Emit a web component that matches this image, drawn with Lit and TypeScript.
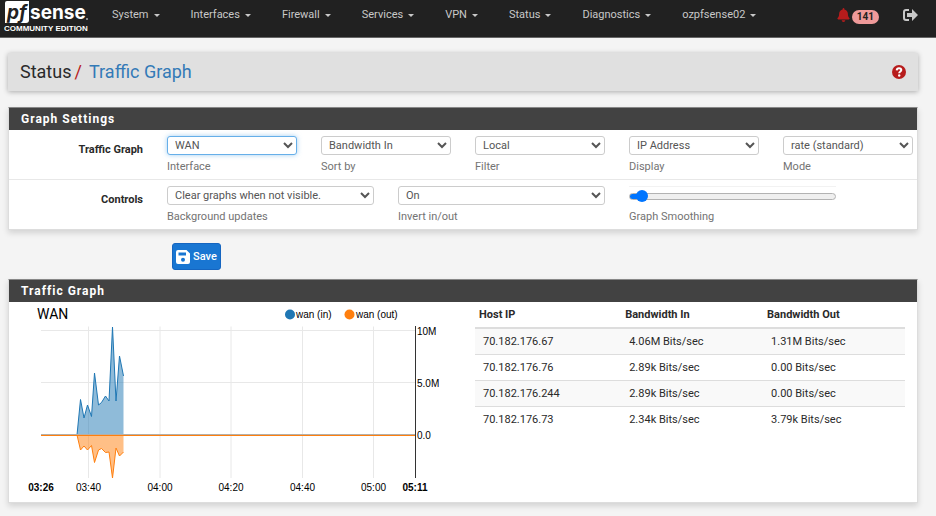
import { LitElement, html, svg, css } from "lit";
import { customElement } from "lit/decorators.js";

const MENU = ["System", "Interfaces", "Firewall", "Services", "VPN", "Status", "Diagnostics", "ozpfsense02"];

@customElement("top-nav")
class TopNav extends LitElement {
  static styles = css`
    :host { display: block; }
    .bar { display: flex; align-items: flex-start; height: 37px; background: #212121; border-bottom: 1px solid #666; font-family: Roboto, sans-serif; font-size: 11px; line-height: 16px; color: #c8c8c8; }
    .logo { display: block; width: 86px; height: 36px; margin: 0 7px 0 4px; flex: none; }
    .brand { display: block; }
    .menu { display: flex; margin: 0; padding: 0; list-style: none; flex: 1; }
    .toggle { display: flex; align-items: center; gap: 5px; padding: 7px 15px 7px 15px; border: 0; background: none; font: inherit; color: inherit; }
    .caret { margin-right: 1px; border: 3px solid transparent; border-top-color: currentColor; border-bottom: 0; }
    .tools { display: flex; align-items: flex-start; padding-right: 18px; }
    .alerts { display: flex; align-items: flex-start; gap: 2px; margin: 8px 24px 0 0; padding: 0; border: 0; background: none; font: inherit; }
    .bell { width: 13px; height: 14px; fill: #b71c1c; }
    .badge { margin-top: 2px; padding: 0 5px; border-radius: 8px; background: #ef9a9a; color: #212121; font-size: 10px; font-weight: 700; line-height: 14px; }
    .exit { width: 15px; height: 12px; margin-top: 9px; fill: #c8c8c8; display: block; }
    .wordmark { font: 700 19px Inter, sans-serif; fill: #fff; }
    .pf { font: italic 700 19px Inter, sans-serif; fill: #212121; }
    .edition { font: 700 8px "Liberation Sans", Arial, sans-serif; fill: #fff; }
  `;
  render() {
    return html`
      <nav class="bar">
        <a class="brand" href="#" aria-label="pfSense Community Edition">
          <svg class="logo" viewBox="0 0 86 36">
            <path d="M3 1H25V20Q25 23 22 23H1V3Q1 1 3 1Z" fill="#fff" />
            <text class="pf" x="3" y="19">pf</text>
            <text class="wordmark" x="26" y="19">sense</text>
            <circle cx="83" cy="19" r="1" fill="#aaa" />
            <text class="edition" x="0" y="31">COMMUNITY EDITION</text>
          </svg>
        </a>
        <ul class="menu">
          ${MENU.map((m) => html`<li><button class="toggle">${m}<span class="caret"></span></button></li>`)}
        </ul>
        <div class="tools">
          <button class="alerts" aria-label="Notices">
            <svg class="bell" viewBox="0 0 448 512"><path d="M224 512c35 0 64-29 64-64H160c0 35 29 64 64 64zm215-150c-19-21-55-52-55-154 0-78-54-140-128-155V32a32 32 0 0 0-64 0v21C118 68 64 130 64 208c0 102-36 133-55 154-6 6-9 14-9 22 0 16 13 32 32 32h384c19 0 32-16 32-32 0-8-3-16-9-22z" /></svg>
            <span class="badge">141</span>
          </button>
          <a href="#" aria-label="Log out">
            <svg class="exit" viewBox="0 0 15 12"><path d="M6 0H3Q0 0 0 3V9Q0 12 3 12H6V10H3Q2 10 2 9V3Q2 2 3 2H6Z" /><path d="M9 0L15 6 9 12V8H4V4H9Z" /></svg>
          </a>
        </div>
      </nav>`;
  }
}

const FIELDS = [
  { id: "if", value: "WAN", help: "Interface" },
  { id: "sort", value: "Bandwidth In", help: "Sort by" },
  { id: "filter", value: "Local", help: "Filter" },
  { id: "display", value: "IP Address", help: "Display" },
  { id: "mode", value: "rate (standard)", help: "Mode" },
];
const CONTROLS = [
  { id: "bg", value: "Clear graphs when not visible.", help: "Background updates" },
  { id: "invert", value: "On", help: "Invert in/out" },
];

@customElement("graph-settings")
class GraphSettings extends LitElement {
  static styles = css`
    :host { display: block; }
    .row { display: grid; grid-template-columns: repeat(12, minmax(0, 1fr)); margin: 0 -8px; padding: 6px 0 4px; }
    .rule { height: 1px; background: #e8e8e8; }
    .title { grid-column: span 2; padding: 6px 12px 0; text-align: right; font-weight: 700; }
    .two { grid-column: span 2; }
    .three { grid-column: span 3; }
    .field { padding: 0 12px; display: flex; flex-direction: column; }
    .select { display: block; width: 100%; height: 19px; box-sizing: border-box; padding: 0 0 0 3px; border: 1px solid #ccc; border-radius: 3px; background-color: #fff; color: #555; font: 11px Roboto, sans-serif; outline: 0; }
    .active { border-color: #66afe9; box-shadow: 0 0 5px rgba(102, 175, 233, 0.6); }
    .help { margin-top: 4px; line-height: 16px; color: #737373; }
    .range { appearance: none; display: block; width: 100%; height: 19px; margin: 0; border-top: 1px solid #f2f2f2; box-sizing: border-box; background: none; }
    .range::-webkit-slider-runnable-track { box-sizing: border-box; height: 7px; border: 1px solid #b2b2b2; border-radius: 4px; background: linear-gradient(to right, #0075ff 12px, #efefef 12px); }
    .range::-webkit-slider-thumb { appearance: none; width: 12px; height: 12px; margin-top: -4px; border-radius: 50%; background: #0075ff; }
  `;
  field(f: { id: string; value: string; help: string }, span: string) {
    return html`<div class="field ${span}">
      <select class="select ${f.id === "if" ? "active" : ""}" id=${f.id}><option>${f.value}</option></select>
      <label class="help" for=${f.id}>${f.help}</label>
    </div>`;
  }
  render() {
    return html`
      <div class="row"><div class="title">Traffic Graph</div>${FIELDS.map((f) => this.field(f, "two"))}</div>
      <div class="rule"></div>
      <div class="row">
        <div class="title">Controls</div>
        ${CONTROLS.map((f) => this.field(f, "three"))}
        <div class="field three">
          <input class="range" type="range" id="smooth" min="0" max="100" value="3" />
          <label class="help" for="smooth">Graph Smoothing</label>
        </div>
      </div>`;
  }
}

const TICKS_X: [number, string][] = [[79.5, "03:40"], [151, "04:00"], [222, "04:20"], [293.5, "04:40"], [364.5, "05:00"]];
const TICKS_Y: [number, string][] = [[28.5, "10M"], [80.5, "5.0M"], [132.5, "0.0"]];
const IN_POINTS = "68,133 71.5,97.5 75,116 78.5,103 82.5,114.5 85.5,71 89.5,103 92.5,100.5 96.5,94 100,99 103.5,25 107,99 110.5,54 114.5,74";
const OUT_POINTS = "68,133 71.5,148 75,144 78.5,148 82.5,143.5 85.5,160.5 89.5,148 92.5,146.5 96.5,150.5 100,150 103.5,176 107,146 110.5,154 114.5,150";

@customElement("traffic-chart")
class TrafficChart extends LitElement {
  static styles = css`
    :host { display: block; }
    .chart { display: block; width: 100%; }
    .name { font: 14px Roboto, sans-serif; fill: #000; }
    .tick { font: 10px "Liberation Sans", Arial, sans-serif; fill: #000; }
    .mid { text-anchor: middle; }
    .bold { font-weight: 700; }
    .grid { stroke: #e8e8e8; }
    .in { fill: #1f77b4; }
    .out { fill: #ff7f0e; }
    .area { fill-opacity: 0.5; }
    .line-in { fill: none; stroke: #1f77b4; }
    .line-out { fill: none; stroke: #ff7f0e; }
    .zero { stroke: #b5b0a8; }
  `;
  render() {
    return html`<svg class="chart" viewBox="0 0 454 200" role="img" aria-label="WAN traffic">
      <text class="name" x="28" y="17">WAN</text>
      <circle class="in" cx="281" cy="12.5" r="5" /><text class="tick" x="287" y="16">wan (in)</text>
      <circle class="out" cx="340.5" cy="12.5" r="5" /><text class="tick" x="347" y="16">wan (out)</text>
      ${TICKS_X.map(([x, t]) => svg`<path class="grid" d="M${x} 24.5V176" /><text class="tick mid" x=${x} y="189">${t}</text>`)}
      ${TICKS_Y.map(([y, t]) => svg`<path class="grid" d="M32 ${y}H406" /><text class="tick" x="408" y=${y + 4}>${t}</text>`)}
      <path class="area in" d="M${IN_POINTS} 114.5,133Z" />
      <path class="area out" d="M${OUT_POINTS} 114.5,133Z" />
      <polyline class="line-in" points=${IN_POINTS} />
      <polyline class="line-out" points=${OUT_POINTS} />
      <path class="zero" d="M32 132.5H406" />
      <path class="line-out" d="M32 133.5H406" />
      <path d="M406.5 24V176" stroke="#333" />
      <text class="tick mid bold" x="32" y="189">03:26</text>
      <text class="tick mid bold" x="406" y="189">05:11</text>
    </svg>`;
  }
}

const HOSTS = [
  ["70.182.176.67", "4.06M Bits/sec", "1.31M Bits/sec"],
  ["70.182.176.76", "2.89k Bits/sec", "0.00 Bits/sec"],
  ["70.182.176.244", "2.89k Bits/sec", "0.00 Bits/sec"],
  ["70.182.176.73", "2.34k Bits/sec", "3.79k Bits/sec"],
];

@customElement("app-root")
class AppRoot extends LitElement {
  static styles = css`
    :host { display: block; min-height: 100vh; background: #f4f4f4; color: #2a2a2a; font: 11px/16px Roboto, sans-serif; }
    .page { padding: 15px 18px 13px 8px; }
    .crumbs { display: flex; align-items: center; justify-content: space-between; height: 38px; padding: 0 12px; background: #e0e0e0; box-shadow: 0 1px 5px rgba(0, 0, 0, 0.3); }
    .path { margin: 0; font-size: 18px; line-height: 24px; font-weight: 400; }
    .slash { margin: 0 3px; color: #b71c1c; }
    .here { color: #337ab7; text-decoration: none; }
    .help { display: block; width: 14px; height: 14px; }
    .panel { border: 1px solid #ddd; border-top-color: #888; background: #fff; box-shadow: 0 3px 6px rgba(0, 0, 0, 0.14); }
    .settings { margin-top: 16px; }
    .heading { margin: 0; padding: 3px 12px; background: #424242; color: #fff; font-size: 12px; line-height: 16px; font-weight: 700; letter-spacing: 1px; }
    .save { display: flex; align-items: center; gap: 3px; height: 27px; margin: 13px 0 9px 164px; padding: 0 3px; border: 1px solid #1565c0; border-radius: 3px; background: #1976d2; color: #fff; font: 500 11px Roboto, sans-serif; }
    .disk { width: 14px; height: 14px; fill: #fff; }
    .body { display: grid; grid-template-columns: 1fr 1fr; }
    .hosts { padding: 0 12px; }
    .table { width: 100%; border-collapse: collapse; table-layout: fixed; }
    .table th { height: 16px; padding: 5px 4px 4px; border-bottom: 2px solid #ddd; text-align: left; font-weight: 700; }
    .table td { height: 17px; padding: 4px 8px; border-top: 1px solid #ddd; }
    .table tbody tr:nth-child(odd) { background: #f9f9f9; }
    .c1 { width: 34%; }
    .c2 { width: 33%; }
  `;
  render() {
    return html`
      <top-nav></top-nav>
      <main class="page">
        <header class="crumbs">
          <h1 class="path">Status<span class="slash">/</span> <a class="here" href="#">Traffic Graph</a></h1>
          <a href="#" aria-label="Help">
            <svg class="help" viewBox="0 0 14 14"><circle cx="7" cy="7" r="7" fill="#b71c1c" /><path d="M4.7 5.4C4.8 3.9 5.8 3.2 7 3.2C8.4 3.2 9.3 4 9.3 5.1C9.3 6.6 7.2 6.5 7.2 8.3" fill="none" stroke="#fff" stroke-width="2" /><circle cx="7.2" cy="10.5" r="1.2" fill="#fff" /></svg>
          </a>
        </header>
        <section class="panel settings">
          <h2 class="heading">Graph Settings</h2>
          <graph-settings></graph-settings>
        </section>
        <button class="save">
          <svg class="disk" viewBox="0 0 14 14"><path fill-rule="evenodd" d="M2 0H10.5L14 3.5V12Q14 14 12 14H2Q0 14 0 12V2Q0 0 2 0ZM2.5 2.5V5.5H10V2.5ZM7 7.8A2 2 0 1 0 7 11.8A2 2 0 1 0 7 7.8Z" /></svg>
          Save
        </button>
        <section class="panel">
          <h2 class="heading">Traffic Graph</h2>
          <div class="body">
            <traffic-chart></traffic-chart>
            <div class="hosts">
              <table class="table">
                <colgroup><col class="c1" /><col class="c2" /><col /></colgroup>
                <thead><tr><th>Host IP</th><th>Bandwidth In</th><th>Bandwidth Out</th></tr></thead>
                <tbody>${HOSTS.map((r) => html`<tr>${r.map((c) => html`<td>${c}</td>`)}</tr>`)}</tbody>
              </table>
            </div>
          </div>
        </section>
      </main>`;
  }
}
